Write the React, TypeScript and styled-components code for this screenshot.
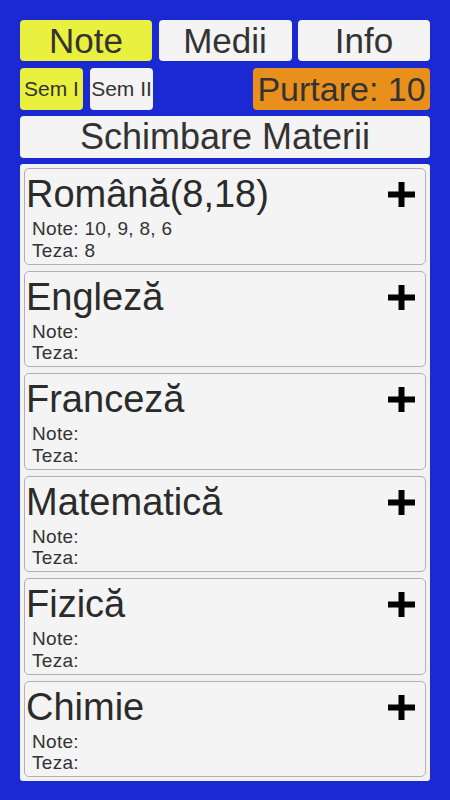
import * as React from 'react';
import styled, { createGlobalStyle } from 'styled-components';

const GlobalStyle = createGlobalStyle`
  html, body {
    margin: 0;
    padding: 0;
    background: #1b29d2;
    font-family: "Liberation Sans", Arial, sans-serif;
  }
`;

type Subject = { name: string; avg?: string; note: string; teza: string };

const subjects: Subject[] = [
  { name: 'Română', avg: '(8,18)', note: '10, 9, 8, 6', teza: '8' },
  { name: 'Engleză', note: '', teza: '' },
  { name: 'Franceză', note: '', teza: '' },
  { name: 'Matematică', note: '', teza: '' },
  { name: 'Fizică', note: '', teza: '' },
  { name: 'Chimie', note: '', teza: '' },
];

const PlusIcon = () => (
  <svg width="27" height="25" viewBox="0 0 27 25">
    <rect x="10.5" y="0" width="6" height="25" fill="#000" />
    <rect x="0" y="9.5" width="27" height="6" fill="#000" />
  </svg>
);

const App: React.FC = () => {
  return (
    <>
      <GlobalStyle />
      <Screen>
        <TabRow>
          <Tab active>Note</Tab>
          <Tab>Medii</Tab>
          <Tab>Info</Tab>
        </TabRow>

        <SemRow>
          <SemButton active>Sem I</SemButton>
          <SemButton>Sem II</SemButton>
          <Spacer />
          <Conduct>Purtare: 10</Conduct>
        </SemRow>

        <WideButton>Schimbare Materii</WideButton>

        <Panel>
          {subjects.map((s) => (
            <Card key={s.name}>
              <CardHead>
                <Title>
                  {s.name}
                  {s.avg}
                </Title>
                <AddButton>
                  <PlusIcon />
                </AddButton>
              </CardHead>
              <Line>Note:{s.note && ` ${s.note}`}</Line>
              <Line>Teza:{s.teza && ` ${s.teza}`}</Line>
            </Card>
          ))}
        </Panel>
      </Screen>
    </>
  );
};

const Screen = styled.div`
  width: 450px;
  height: 800px;
  box-sizing: border-box;
  padding: 20px 20px 19px;
  display: flex;
  flex-direction: column;
  gap: 6px;
  background: #1b29d2;
  color: #333;
`;

const Button = styled.div<{ active?: boolean }>`
  display: flex;
  align-items: center;
  justify-content: center;
  box-sizing: border-box;
  border-radius: 4px;
  background: ${({ active }) => (active ? '#e9f03d' : '#f4f4f4')};
  color: #333;
  white-space: nowrap;
`;

const TabRow = styled.div`
  display: grid;
  grid-template-columns: 132px 133px 132px;
  gap: 6.5px;
  height: 41px;
  margin-bottom: 1px;
`;

const Tab = styled(Button)`
  font-size: 35px;
`;

const SemRow = styled.div`
  display: flex;
  gap: 7px;
  height: 42px;
`;

const SemButton = styled(Button)`
  width: 63px;
  font-size: 21px;
`;

const Spacer = styled.div`
  flex: 1;
`;

const Conduct = styled(Button)`
  width: 177px;
  background: #e9901c;
  font-size: 34px;
`;

const WideButton = styled(Button)`
  height: 42px;
  font-size: 36px;
`;

const Panel = styled.div`
  flex: 1;
  display: flex;
  flex-direction: column;
  gap: 6px;
  padding: 4px;
  background: #f2f2f2;
  border-radius: 3px;
`;

const Card = styled.div`
  flex: 1;
  box-sizing: border-box;
  display: flex;
  flex-direction: column;
  padding: 4px 0 0 1px;
  background: #f4f4f4;
  border: 1px solid #b0b0b0;
  border-radius: 5px;
`;

const CardHead = styled.div`
  display: flex;
  align-items: flex-start;
  justify-content: space-between;
  height: 45px;
`;

const Title = styled.div`
  font-size: 38px;
  line-height: 42px;
  color: #2b2b2b;
`;

const AddButton = styled.div`
  display: flex;
  margin: 9px 10px 0 0;
`;

const Line = styled.div`
  padding-left: 6px;
  font-size: 19px;
  line-height: 21.5px;
  letter-spacing: 0.3px;
  color: #333;
`;

export default App;
